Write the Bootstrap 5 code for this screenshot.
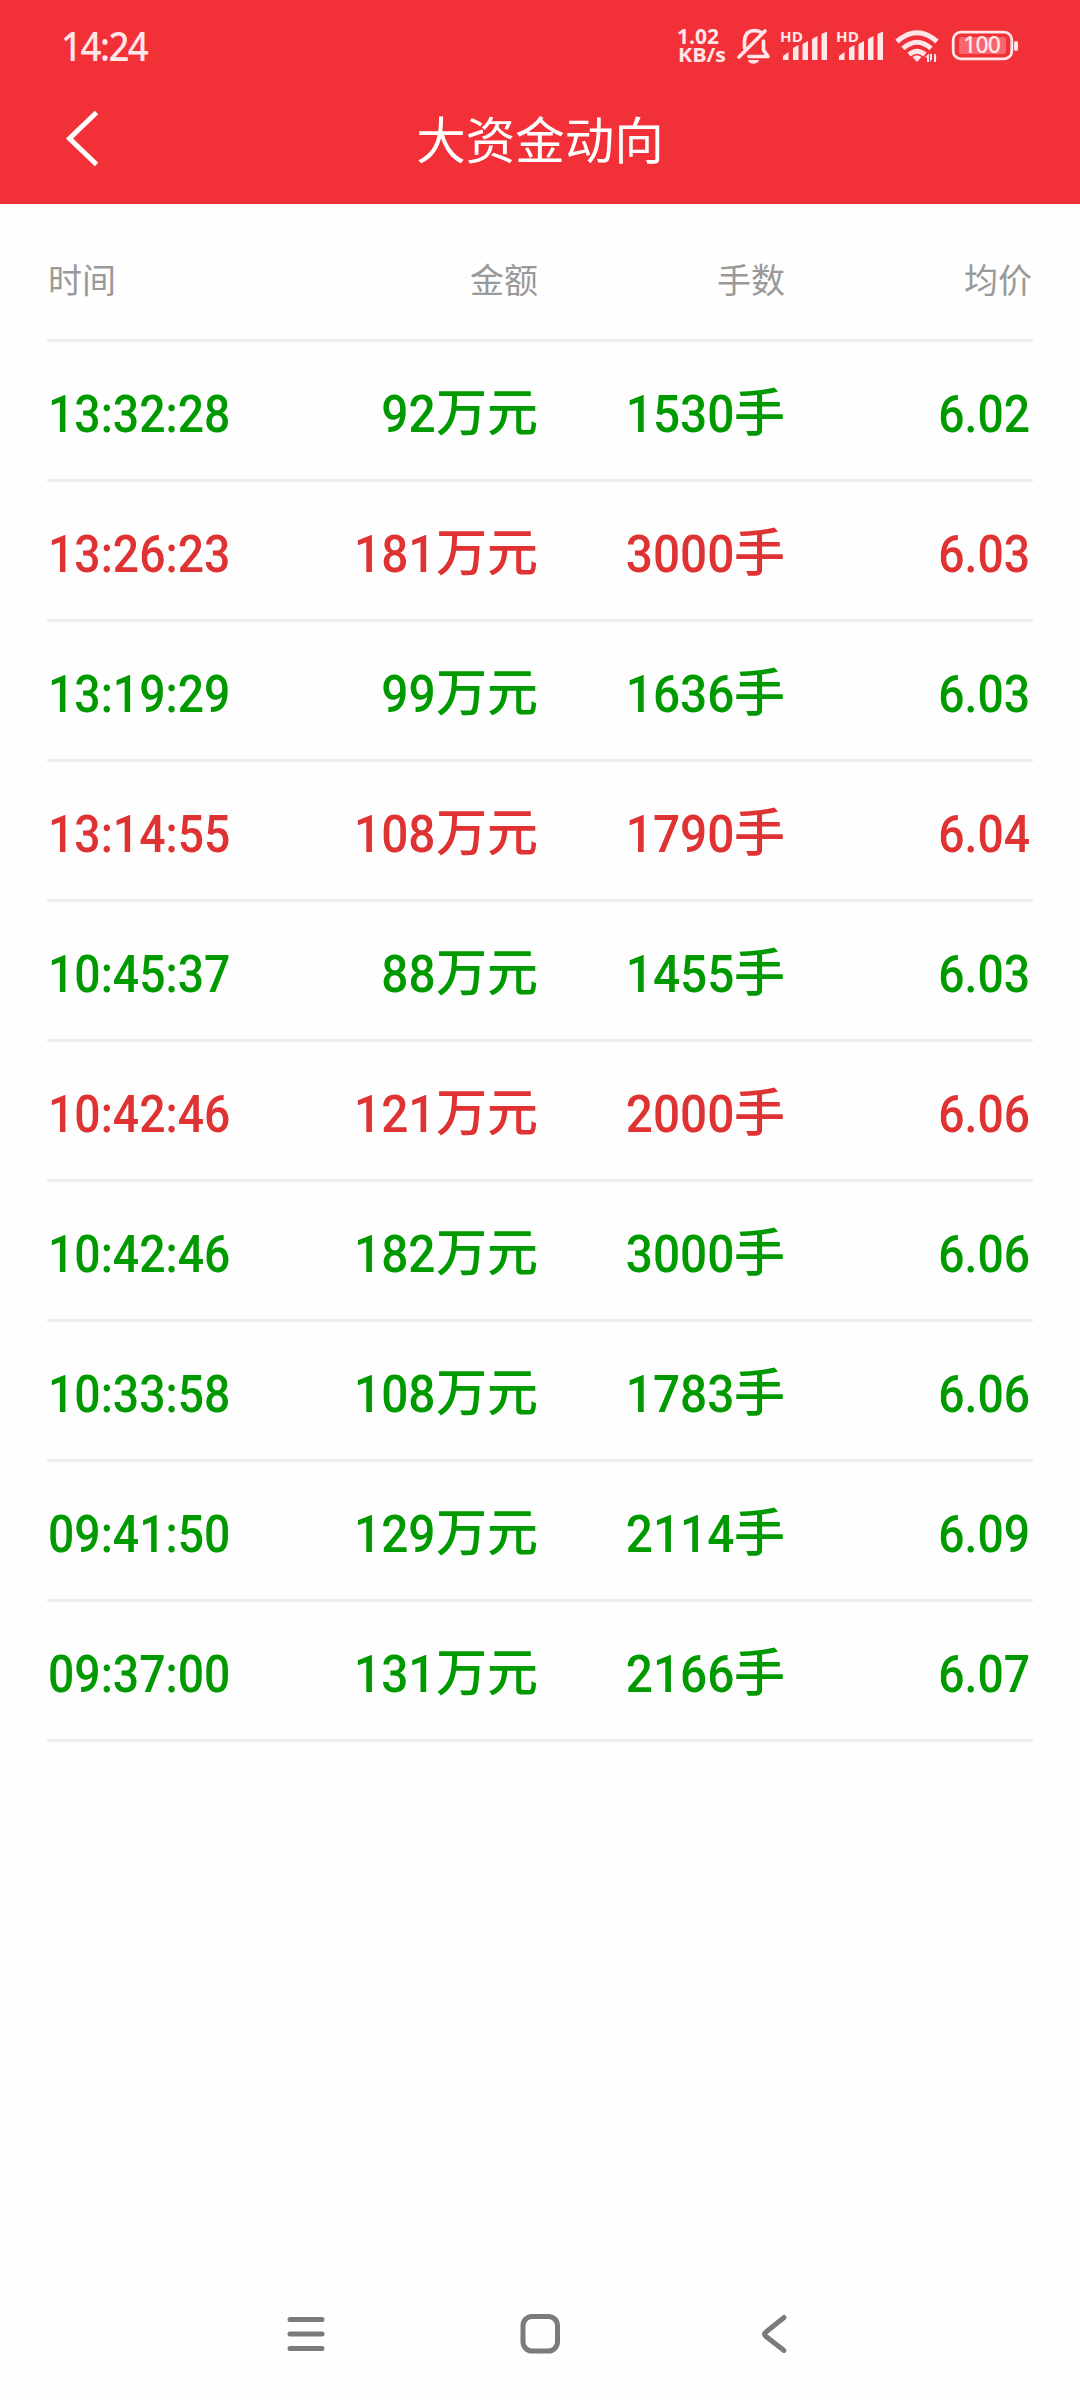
<!DOCTYPE html>
<html lang="zh-CN">
<head>
<meta charset="utf-8">
<meta name="viewport" content="width=device-width, initial-scale=1">
<title>大资金动向</title>
<link href="https://cdn.jsdelivr.net/npm/bootstrap@5.3.0/dist/css/bootstrap.min.css" rel="stylesheet">
<style>
body{font-family:Roboto,"Noto Sans CJK SC",sans-serif;background:#fefefe;height:2400px;overflow:hidden}
.app-top{background:#f23037;height:204px;color:#fff}
.status-row{height:90px;padding:0 60px 0 61px;color:#ffe6e8}
.clock{font:500 39px/40px "Noto Sans",sans-serif;letter-spacing:-1.6px;transform:scaleX(.94);transform-origin:left center;padding-top:1px}
.title-row{height:98px;padding-bottom:2px}
.title-text{font:400 49.500px/60px "Noto Sans CJK SC",sans-serif}
.trade-list{padding:0 47px}
.head-line,.trade-line{border-bottom:3px solid #eee}
.head-line{height:138px;padding-top:15px;color:#999;font:400 34px/40px "Noto Sans CJK SC",sans-serif}
.head-line .c-time{padding-left:1px}
.trade-line{height:140px;font-size:52.500px;line-height:60px;font-weight:500}
.trade-line>div{height:60px}
.c-time{width:201px}.c-amt{width:290px}.c-lot{width:247px}.c-avg{width:247px}
.fall{color:#090}.rise{color:#df3333}
.digits{display:inline-block;line-height:60px;padding-top:3px;transform:scaleX(.91);transform-origin:right center}
.c-time .digits{transform:scaleX(.882);transform-origin:left center;margin-left:1px}
.c-avg .digits{transform:scaleX(.882);margin-right:2px}
.unit{font:500 51px/60px "Noto Sans CJK SC",sans-serif;margin-top:-2px}
.nav-keys{height:132px}
</style>
</head>
<body class="d-flex flex-column m-0">
<header class="app-top">
<div class="status-row d-flex justify-content-between align-items-center">
<span class="clock">14:24</span>
<svg width="345" height="50" viewBox="675 20 345 50" fill="#ffe6e8">
<g font-family="Open Sans, sans-serif" font-weight="700"><text x="677" y="44" font-size="21.500" textLength="42" lengthAdjust="spacingAndGlyphs">1.02</text><text x="678" y="62" font-size="19.500" textLength="48" lengthAdjust="spacingAndGlyphs">KB/s</text>
<text x="780" y="42" font-size="15" textLength="23" lengthAdjust="spacingAndGlyphs">HD</text><text x="836" y="42" font-size="15" textLength="23" lengthAdjust="spacingAndGlyphs">HD</text></g>
<g fill="none" stroke="#ffe6e8" stroke-width="3.600" stroke-linecap="round" stroke-linejoin="round"><path d="M739 57 765 31M744.500 48V42C744.500 35 748 31 754 30.500 757 30.500 759 31 761 32.500M763.500 41V50L768 56.500H749"/></g>
<path d="M748 60H759C758 65 749 65 748 60Z"/>
<g id="bars"><path d="M783 56 788.500 52V60H783ZM793 48 798.500 45V60H793ZM802.500 44 808 41V60H802.500ZM812 39 817.500 36V60H812ZM821.500 34 827 31.500V60H821.500Z"/></g>
<use href="#bars" x="56"/>
<g fill="none" stroke="#ffe6e8" stroke-width="5"><path d="M897 41.500Q917 24 937 41.500M903 48.500Q917 36 931 48.500M909 54.500Q917 48 925 54.500"/></g>
<path d="M912.500 57Q917 53.500 921.500 57L917 62Z"/>
<path d="M925 57 929 53.500V62H927V57.500ZM930 54H932V59L930 62ZM934 62V54H936V57L938 57.500H936V62Z"/>
<rect x="953.200" y="32.200" width="58.600" height="26.600" rx="7.500" fill="none" stroke="#ffe6e8" stroke-width="2.800"/>
<rect x="959" y="37" width="47" height="17" rx="2.500" opacity=".3"/>
<rect x="1014" y="41" width="4" height="10" rx="2"/>
<text x="963" y="53.200" font-family="Noto Sans, sans-serif" font-size="23" font-weight="500" textLength="38">100</text>
</svg>
</div>
<div class="title-row d-flex align-items-center justify-content-center position-relative">
<svg class="position-absolute start-0 top-0" width="110" height="98" viewBox="0 90 110 98" fill="none" stroke="#fff" stroke-width="5"><path d="M96.500 112.500 69.500 138.500 96.500 164.500"/></svg>
<span class="title-text">大资金动向</span>
</div>
</header>
<main class="trade-list flex-grow-1">
<div class="head-line d-flex align-items-center"><div class="c-time">时间</div><div class="c-amt text-end">金额</div><div class="c-lot text-end">手数</div><div class="c-avg text-end">均价</div></div>
<div id="rows"></div>
</main>
<footer class="nav-keys">
<svg width="1080" height="132" viewBox="0 2268 1080 132" fill="none" stroke="#7b7b7b" stroke-width="5" stroke-linecap="round" stroke-linejoin="round"><path d="M290 2319.500H322M290 2334H322M290 2348.500H322"/><rect x="523" y="2316.500" width="34.500" height="34.500" rx="9"/><path d="M784 2317.500 766 2332Q763 2334 766 2336.500L784 2350.500"/></svg>
</footer>
<script src="https://cdn.jsdelivr.net/npm/bootstrap@5.3.0/dist/js/bootstrap.bundle.min.js"></script>
<script>
const trades=[["13:32:28",92,1530,"6.02",0],["13:26:23",181,3000,"6.03",1],["13:19:29",99,1636,"6.03",0],["13:14:55",108,1790,"6.04",1],["10:45:37",88,1455,"6.03",0],["10:42:46",121,2000,"6.06",1],["10:42:46",182,3000,"6.06",0],["10:33:58",108,1783,"6.06",0],["09:41:50",129,2114,"6.09",0],["09:37:00",131,2166,"6.07",0]];
const n=v=>`<span class="digits">${v}</span>`,u=v=>`<span class="unit">${v}</span>`;
document.getElementById("rows").innerHTML=trades.map(([t,a,l,p,up])=>`<div class="trade-line d-flex align-items-center ${up?"rise":"fall"}"><div class="c-time text-nowrap">${n(t)}</div><div class="c-amt d-flex justify-content-end">${n(a)}${u("万元")}</div><div class="c-lot d-flex justify-content-end">${n(l)}${u("手")}</div><div class="c-avg text-end">${n(p)}</div></div>`).join("");
</script>
</body>
</html>
